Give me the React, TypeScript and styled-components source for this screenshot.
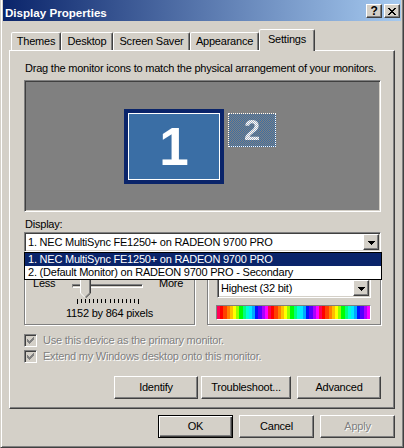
import styled, { createGlobalStyle, css } from 'styled-components';

const FACE = '#d4d0c8';
const SHADOW = '#808080';
const DARK = '#404040';
const NAVY = '#0a246a';
const DESK = '#3a6ea5';

const GlobalStyle = createGlobalStyle`
  * { box-sizing: border-box; }
  html, body { margin: 0; padding: 0; background: ${FACE}; }
  body {
    font-family: "Liberation Sans", Arial, sans-serif;
    font-size: 11px;
    line-height: 13px;
    letter-spacing: -0.22px;
    color: #000;
  }
  button { font: inherit; letter-spacing: inherit; }
`;

// classic 3d borders
const raised = css`
  background: ${FACE};
  border: 1px solid;
  border-color: #fff ${DARK} ${DARK} #fff;
  box-shadow: inset -1px -1px ${SHADOW};
`;

const sunken = css`
  border: 1px solid;
  border-color: ${SHADOW} #fff #fff ${SHADOW};
  box-shadow: inset 1px 1px ${DARK}, inset -1px -1px ${FACE};
`;

const disabledText = css`
  color: ${SHADOW};
  text-shadow: 1px 1px #fff;
`;

const tabs = [
    { label: 'Themes', width: 50 },
    { label: 'Desktop', width: 52 },
    { label: 'Screen Saver', width: 77 },
    { label: 'Appearance', width: 69 },
    { label: 'Settings', width: 56, active: true },
];

const displays = [
    '1. NEC MultiSync FE1250+ on RADEON 9700 PRO',
    '2. (Default Monitor) on RADEON 9700 PRO - Secondary',
];

// one cycle of the colour quality strip
const hues = [340, 0, 15, 30, 45, 60, 85, 120, 150, 170, 185, 200, 235, 260, 280, 300];

const App = () => {
    const strip = [...hues, ...hues, ...hues];
    return (
        <>
            <GlobalStyle />
            <Window>
                <TitleBar>
                    <Caption>Display Properties</Caption>
                    <CaptionButton aria-label="Help">
                        <HelpGlyph>?</HelpGlyph>
                    </CaptionButton>
                    <CaptionButton aria-label="Close">
                        <svg width="8" height="7" viewBox="0 0 8 7" shapeRendering="crispEdges">
                            {[0, 1, 2, 3, 4, 5, 6].map((r) => (
                                <g key={r} fill="#000">
                                    <rect x={r} y={r} width="2" height="1" />
                                    <rect x={6 - r} y={r} width="2" height="1" />
                                </g>
                            ))}
                        </svg>
                    </CaptionButton>
                </TitleBar>

                <TabRow>
                    {tabs.map((t) => (
                        <Tab key={t.label} $w={t.width} $active={t.active}>
                            {t.label}
                        </Tab>
                    ))}
                </TabRow>

                <Panel>
                    <Hint>Drag the monitor icons to match the physical arrangement of your monitors.</Hint>
                    <MonitorArea>
                        <PrimaryMonitor>1</PrimaryMonitor>
                        <SecondaryMonitor>
                            <SecondaryNumber>2</SecondaryNumber>
                        </SecondaryMonitor>
                    </MonitorArea>

                    <FieldLabel>Display:</FieldLabel>
                    <DisplayPicker>
                        <Combo>
                            <ComboText>{displays[0]}</ComboText>
                            <DropButton>
                                <Arrow />
                            </DropButton>
                        </Combo>
                        <DropList>
                            {displays.map((d, i) => (
                                <DropItem key={d} $selected={i === 0}>
                                    {d}
                                </DropItem>
                            ))}
                        </DropList>
                    </DisplayPicker>

                    {/* group captions sit under the open list */}
                    <GroupRow>
                        <Group $w={171}>
                            <SliderRow>
                                <SliderLabel>Less</SliderLabel>
                                <SliderBody>
                                    <TrackBox>
                                        <Channel />
                                        <Thumb>
                                            <svg width="11" height="21" viewBox="0 0 11 21">
                                                <path d="M0 0H11V16L5.5 21L0 16Z" fill={FACE} />
                                                <path d="M0.5 16V0.5H10" stroke="#fff" fill="none" />
                                                <path d="M0.5 16L5 20.5" stroke="#fff" fill="none" />
                                                <path d="M9.5 1V16L5.5 20" stroke={SHADOW} fill="none" />
                                                <path d="M10.5 0V16.2L5.5 21" stroke={DARK} fill="none" />
                                            </svg>
                                        </Thumb>
                                    </TrackBox>
                                    <svg width="71" height="5" shapeRendering="crispEdges">
                                        {Array.from({ length: 16 }).map((_, i) => (
                                            <rect
                                                key={i}
                                                x={5 + Math.round(i * 4.07)}
                                                y={0}
                                                width={1}
                                                height={i === 0 || i === 15 ? 5 : 4}
                                                fill="#000"
                                            />
                                        ))}
                                    </svg>
                                </SliderBody>
                                <SliderLabel $right>More</SliderLabel>
                            </SliderRow>
                            <Resolution>1152 by 864 pixels</Resolution>
                        </Group>
                        <Group>
                            <ColorCombo>
                                <ComboText>Highest (32 bit)</ComboText>
                                <DropButton>
                                    <Arrow />
                                </DropButton>
                            </ColorCombo>
                            <ColorStrip>
                                <svg
                                    width="100%"
                                    height="100%"
                                    viewBox={`0 0 ${strip.length} 1`}
                                    preserveAspectRatio="none"
                                    shapeRendering="crispEdges"
                                >
                                    {strip.map((h, i) => (
                                        <rect key={i} x={i} y={0} width={1.02} height={1} fill={`hsl(${h}, 100%, 50%)`} />
                                    ))}
                                </svg>
                            </ColorStrip>
                        </Group>
                    </GroupRow>

                    <CheckRow>
                        <CheckBox>
                            <Check />
                        </CheckBox>
                        Use this device as the primary monitor.
                    </CheckRow>
                    <CheckRow>
                        <CheckBox>
                            <Check />
                        </CheckBox>
                        Extend my Windows desktop onto this monitor.
                    </CheckRow>

                    <ButtonRow>
                        <PushButton $w={84}>Identify</PushButton>
                        <PushButton $w={90} $ml={3}>
                            Troubleshoot...
                        </PushButton>
                        <PushButton $w={84} $ml={6}>
                            Advanced
                        </PushButton>
                    </ButtonRow>
                </Panel>

                <DialogButtons>
                    <PushButton $w={75} $default>
                        OK
                    </PushButton>
                    <PushButton $w={75}>Cancel</PushButton>
                    <PushButton $w={75} disabled>
                        Apply
                    </PushButton>
                </DialogButtons>
            </Window>
        </>
    );
};

const Arrow = () => (
    <svg width="7" height="4" viewBox="0 0 7 4" shapeRendering="crispEdges">
        <rect x="0" y="0" width="7" height="1" fill="#000" />
        <rect x="1" y="1" width="5" height="1" fill="#000" />
        <rect x="2" y="2" width="3" height="1" fill="#000" />
        <rect x="3" y="3" width="1" height="1" fill="#000" />
    </svg>
);

const Check = () => (
    <svg width="7" height="7" viewBox="0 0 7 7" shapeRendering="crispEdges" fill={SHADOW}>
        <rect x="6" y="0" width="1" height="3" />
        <rect x="5" y="1" width="1" height="3" />
        <rect x="4" y="2" width="1" height="3" />
        <rect x="3" y="3" width="1" height="3" />
        <rect x="2" y="4" width="1" height="3" />
        <rect x="1" y="3" width="1" height="3" />
        <rect x="0" y="2" width="1" height="3" />
    </svg>
);

const Window = styled.div`
    width: 404px;
    height: 448px;
    background: ${FACE};
    border: 1px solid;
    border-color: ${FACE} ${DARK} ${DARK} ${FACE};
    border-top: none;
    padding: 0 2px 2px;
    box-shadow: inset 1px 0 #fff, inset -1px -1px ${SHADOW};
    display: flex;
    flex-direction: column;
`;

const TitleBar = styled.div`
    height: 21px;
    display: flex;
    align-items: center;
    padding: 4px 1px 0 2px;
    background: linear-gradient(to right, ${NAVY}, #a6caf0);
    color: #fff;
`;

const Caption = styled.span`
    flex: 1;
    font-weight: bold;
    font-size: 11.6px;
    letter-spacing: 0;
`;

const CaptionButton = styled.button`
    ${raised};
    align-self: flex-start;
    width: 16px;
    height: 14px;
    padding: 0;
    margin-left: 2px;
    display: flex;
    align-items: center;
    justify-content: center;
`;

const HelpGlyph = styled.span`
    font-weight: bold;
    font-size: 12px;
    line-height: 12px;
    color: #000;
`;

const TabRow = styled.div`
    position: relative;
    z-index: 1;
    display: flex;
    align-items: flex-end;
    height: 21px;
    margin: 8px 6px 0;
    padding-left: 2px;
`;

const Tab = styled.div<{ $w: number; $active?: boolean }>`
    width: ${(p) => p.$w}px;
    height: ${(p) => (p.$active ? 22 : 18)}px;
    margin-bottom: ${(p) => (p.$active ? -1 : 0)}px;
    background: ${FACE};
    border: 1px solid;
    border-bottom: none;
    border-color: #fff ${DARK} transparent #fff;
    border-radius: 2px 2px 0 0;
    box-shadow: inset -1px 0 ${SHADOW};
    display: flex;
    align-items: center;
    justify-content: center;
    padding-bottom: ${(p) => (p.$active ? 3 : 1)}px;
    white-space: nowrap;
`;

const Panel = styled.div`
    height: 359px;
    margin: 0 6px;
    border: 1px solid;
    border-color: #fff ${DARK} ${DARK} #fff;
    box-shadow: inset -1px -1px ${SHADOW};
    padding: 11px 13px 0 14px;
    display: flex;
    flex-direction: column;
`;

const Hint = styled.div`
    padding-left: 1px;
    white-space: nowrap;
`;

const MonitorArea = styled.div`
    ${sunken};
    position: relative;
    height: 132px;
    margin-top: 5px;
    background: ${SHADOW};
`;

const PrimaryMonitor = styled.div`
    position: absolute;
    left: 99px;
    top: 28px;
    width: 100px;
    height: 75px;
    border: 4px solid ${NAVY};
    box-shadow: inset 0 0 0 1px #fff;
    background: ${DESK};
    display: flex;
    align-items: center;
    justify-content: center;
    color: #fff;
    font-weight: bold;
    font-size: 53px;
    line-height: 1;
    letter-spacing: 0;
`;

const SecondaryMonitor = styled.div`
    position: absolute;
    left: 203px;
    top: 32px;
    width: 48px;
    height: 34px;
    border: 1px dotted #fff;
    background: repeating-conic-gradient(${DESK} 0 25%, ${SHADOW} 0 50%) 0 0 / 2px 2px;
    display: flex;
    align-items: center;
    justify-content: center;
`;

const SecondaryNumber = styled.span`
    font-weight: bold;
    font-size: 29px;
    line-height: 1;
    letter-spacing: 0;
    background: repeating-conic-gradient(#fff 0 25%, #aab4c4 0 50%) 0 0 / 2px 2px;
    -webkit-background-clip: text;
    background-clip: text;
    color: transparent;
`;

const FieldLabel = styled.div`
    margin-top: 6px;
    padding-left: 1px;
`;

const DisplayPicker = styled.div`
    position: relative;
    z-index: 2;
    margin-top: 1px;
`;

const Combo = styled.div`
    ${sunken};
    height: 20px;
    background: #fff;
    display: flex;
    align-items: center;
    padding: 1px 1px 1px 3px;
`;

const ComboText = styled.span`
    flex: 1;
    white-space: nowrap;
    overflow: hidden;
`;

const DropButton = styled.span`
    ${raised};
    width: 16px;
    height: 16px;
    display: flex;
    align-items: center;
    justify-content: center;
    padding-top: 1px;
`;

const DropList = styled.ul`
    position: absolute;
    left: 0;
    top: 100%;
    width: 358px;
    margin: 0;
    padding: 0;
    list-style: none;
    background: #fff;
    border: 1px solid #000;
`;

const DropItem = styled.li<{ $selected?: boolean }>`
    height: 13px;
    line-height: 13px;
    padding-left: 3px;
    white-space: nowrap;
    background: ${(p) => (p.$selected ? NAVY : '#fff')};
    color: ${(p) => (p.$selected ? '#fff' : '#000')};
`;

const GroupRow = styled.div`
    display: flex;
    gap: 12px;
    margin-top: 11px;
`;

const Group = styled.div<{ $w?: number }>`
    ${(p) => (p.$w ? `width: ${p.$w}px;` : 'flex: 1;')}
    height: 62px;
    border: 1px solid ${SHADOW};
    box-shadow: inset 1px 1px #fff, 1px 1px #fff;
`;

const SliderRow = styled.div`
    display: grid;
    grid-template-columns: 39px 71px auto;
    margin-top: 13px;
    padding-left: 8px;
`;

const SliderLabel = styled.span<{ $right?: boolean }>`
    padding-left: ${(p) => (p.$right ? 16 : 0)}px;
`;

const SliderBody = styled.div`
    display: flex;
    flex-direction: column;
    gap: 1px;
`;

const TrackBox = styled.div`
    position: relative;
    height: 21px;
`;

const Channel = styled.div`
    margin-top: 7px;
    height: 4px;
    border: 1px solid;
    border-color: ${SHADOW} #fff #fff ${SHADOW};
    box-shadow: inset 0 1px ${DARK};
`;

const Thumb = styled.div`
    position: absolute;
    left: 8px;
    top: 0;
    width: 11px;
    height: 21px;
    line-height: 0;
`;

const Resolution = styled.div`
    margin-top: 3px;
    text-align: center;
    white-space: nowrap;
`;

const ColorCombo = styled(Combo)`
    width: 154px;
    margin: 14px 0 0 9px;
`;

const ColorStrip = styled.div`
    width: 155px;
    height: 15px;
    margin: 7px 0 0 8px;
    border: 1px solid;
    border-color: ${SHADOW} #fff #fff ${SHADOW};
    line-height: 0;
`;

const CheckRow = styled.label`
    ${disabledText};
    display: flex;
    align-items: center;
    gap: 6px;
    height: 16px;
    white-space: nowrap;
    &:first-of-type {
        margin-top: 7px;
    }
`;

const CheckBox = styled.span`
    ${sunken};
    width: 13px;
    height: 13px;
    background: ${FACE};
    display: flex;
    align-items: center;
    justify-content: center;
    text-shadow: none;
`;

const ButtonRow = styled.div`
    display: flex;
    justify-content: flex-end;
    margin-top: 12px;
`;

const PushButton = styled.button<{ $w: number; $ml?: number; $default?: boolean }>`
    ${raised};
    width: ${(p) => p.$w}px;
    height: 23px;
    margin-left: ${(p) => p.$ml ?? 0}px;
    padding: 0;
    color: #000;
    white-space: nowrap;
    ${(p) =>
        p.$default &&
        css`
            border: 1px solid #000;
            box-shadow: inset 1px 1px #fff, inset -1px -1px ${DARK}, inset -2px -2px ${SHADOW};
        `}
    &:disabled {
        ${disabledText};
    }
`;

const DialogButtons = styled.div`
    display: flex;
    justify-content: flex-end;
    gap: 6px;
    margin-top: 6px;
    padding-right: 6px;
`;

export default App;
